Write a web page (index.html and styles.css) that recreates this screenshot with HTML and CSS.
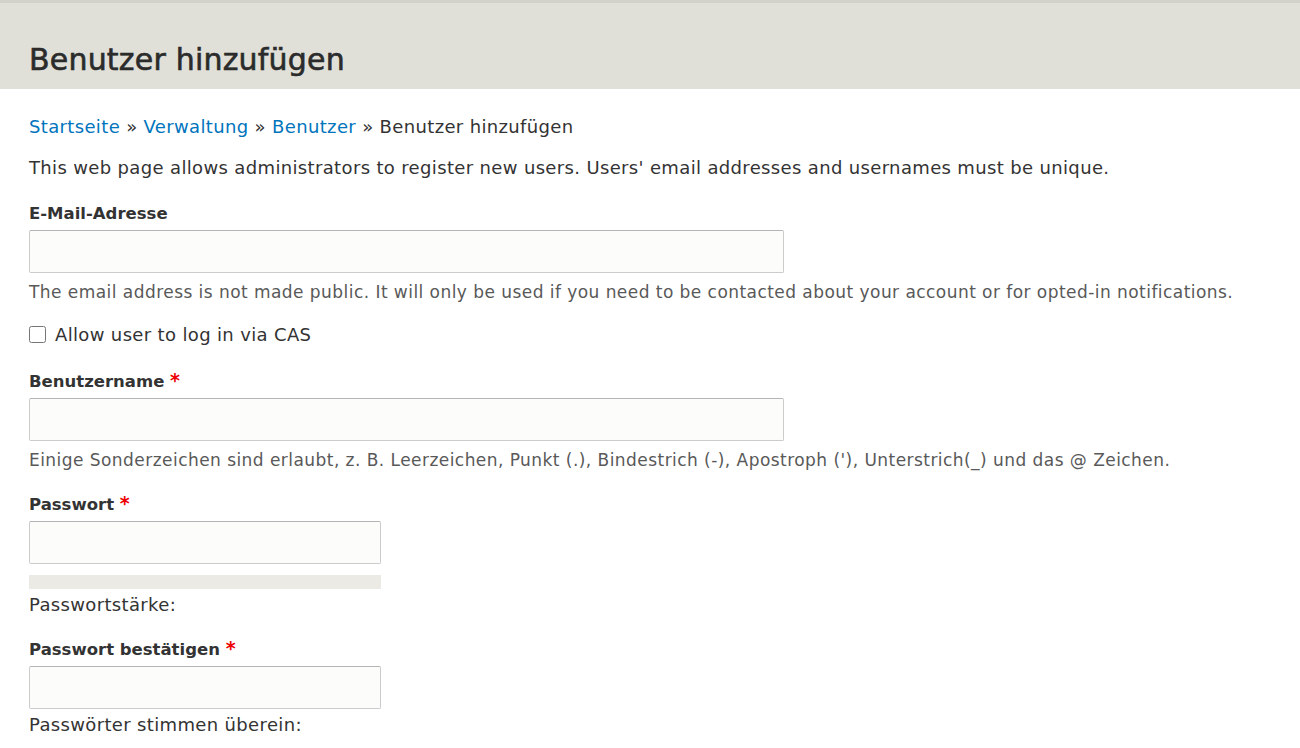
FILE: index.html
```html
<!DOCTYPE html>
<html lang="de">
  <head>
    <meta charset="UTF-8" />
    <meta name="viewport" content="width=device-width, initial-scale=1.0" />
    <title>Benutzer hinzufügen</title>
    <link rel="stylesheet" href="styles.css">
  </head>
  <body>
    <header class="kopf">
      <h1 class="seitentitel">Benutzer hinzufügen</h1>
    </header>

    <main class="inhalt">
      <nav class="breadcrumb">
        <a href="#">Startseite</a> » <a href="#">Verwaltung</a> »
        <a href="#">Benutzer</a> » Benutzer hinzufügen
      </nav>

      <p class="hinweis">
        This web page allows administrators to register new users. Users' email addresses and usernames must be unique.
      </p>

      <form class="formular">
        <div class="feld">
          <label class="feld-label" for="mail">E-Mail-Adresse</label>
          <input class="eingabe eingabe-lang" type="email" id="mail" />
          <div class="beschreibung">
            The email address is not made public. It will only be used if you need to be contacted about your account or for opted-in notifications.
          </div>
        </div>

        <div class="feld feld-check">
          <input type="checkbox" id="cas" />
          <label for="cas">Allow user to log in via CAS</label>
        </div>

        <div class="feld">
          <label class="feld-label" for="name">Benutzername <span class="pflicht">*</span></label>
          <input class="eingabe eingabe-lang" type="text" id="name" />
          <div class="beschreibung">
            Einige Sonderzeichen sind erlaubt, z. B. Leerzeichen, Punkt (.), Bindestrich (-), Apostroph ('), Unterstrich(_) und das @ Zeichen.
          </div>
        </div>

        <div class="feld">
          <label class="feld-label" for="pass">Passwort <span class="pflicht">*</span></label>
          <input class="eingabe eingabe-kurz" type="password" id="pass" />
          <div class="staerke-balken"></div>
          <div class="staerke-text">Passwortstärke:</div>
        </div>

        <div class="feld">
          <label class="feld-label" for="pass2">Passwort bestätigen <span class="pflicht">*</span></label>
          <input class="eingabe eingabe-kurz" type="password" id="pass2" />
          <div class="staerke-text">Passwörter stimmen überein:</div>
        </div>
      </form>
    </main>
  </body>
</html>
```

FILE: styles.css
```css
* {
  box-sizing: border-box;
}

body {
  margin: 0;
  font-family: "DejaVu Sans", "Open Sans", sans-serif;
  font-size: 18px;
  letter-spacing: 0.35px;
  color: #333;
  background: #fff;
}

a {
  color: #0074bd;
  text-decoration: none;
}

.kopf {
  background: #e0e0d8;
  border-top: 3px solid #d2d2ca;
  height: 89px;
  padding: 0 29px;
  display: flex;
  align-items: flex-end;
}

.seitentitel {
  margin: 0 0 12px;
  font-size: 30px;
  font-weight: normal;
  letter-spacing: 0.2px;
  color: #2b2b2b;
  -webkit-text-stroke: 0.6px #2b2b2b;
}

.inhalt {
  padding: 0 29px;
}

.breadcrumb {
  margin-top: 27px;
  line-height: 22px;
}

.hinweis {
  margin: 19px 0 0;
  line-height: 22px;
}

.formular {
  margin-top: 24px;
}

.feld {
  margin-bottom: 21px;
}

.feld-label {
  display: block;
  font-size: 16.5px;
  letter-spacing: 0;
  font-weight: bold;
  line-height: 22px;
  margin-bottom: 5px;
}

.pflicht {
  color: #e00;
  font-size: 19px;
}

.eingabe {
  display: block;
  height: 43px;
  padding: 4px 8px;
  background: #fcfcfa;
  border: 1px solid #ccc;
  border-top-color: #b4b4b4;
  border-radius: 2px;
  font-size: 16px;
}

.eingabe-lang {
  width: 755px;
}

.eingabe-kurz {
  width: 352px;
}

.beschreibung {
  margin-top: 8px;
  font-size: 17px;
  letter-spacing: 0.45px;
  line-height: 22px;
  color: #595959;
}

.feld-check {
  display: flex;
  align-items: center;
  gap: 9px;
  margin-bottom: 24px;
}

.feld-check input {
  margin: 0;
  width: 17px;
  height: 17px;
}

.staerke-balken {
  width: 352px;
  height: 14px;
  background: #ebeae4;
  margin-top: 11px;
}

.staerke-text {
  margin-top: 5px;
  line-height: 22px;
}
```
